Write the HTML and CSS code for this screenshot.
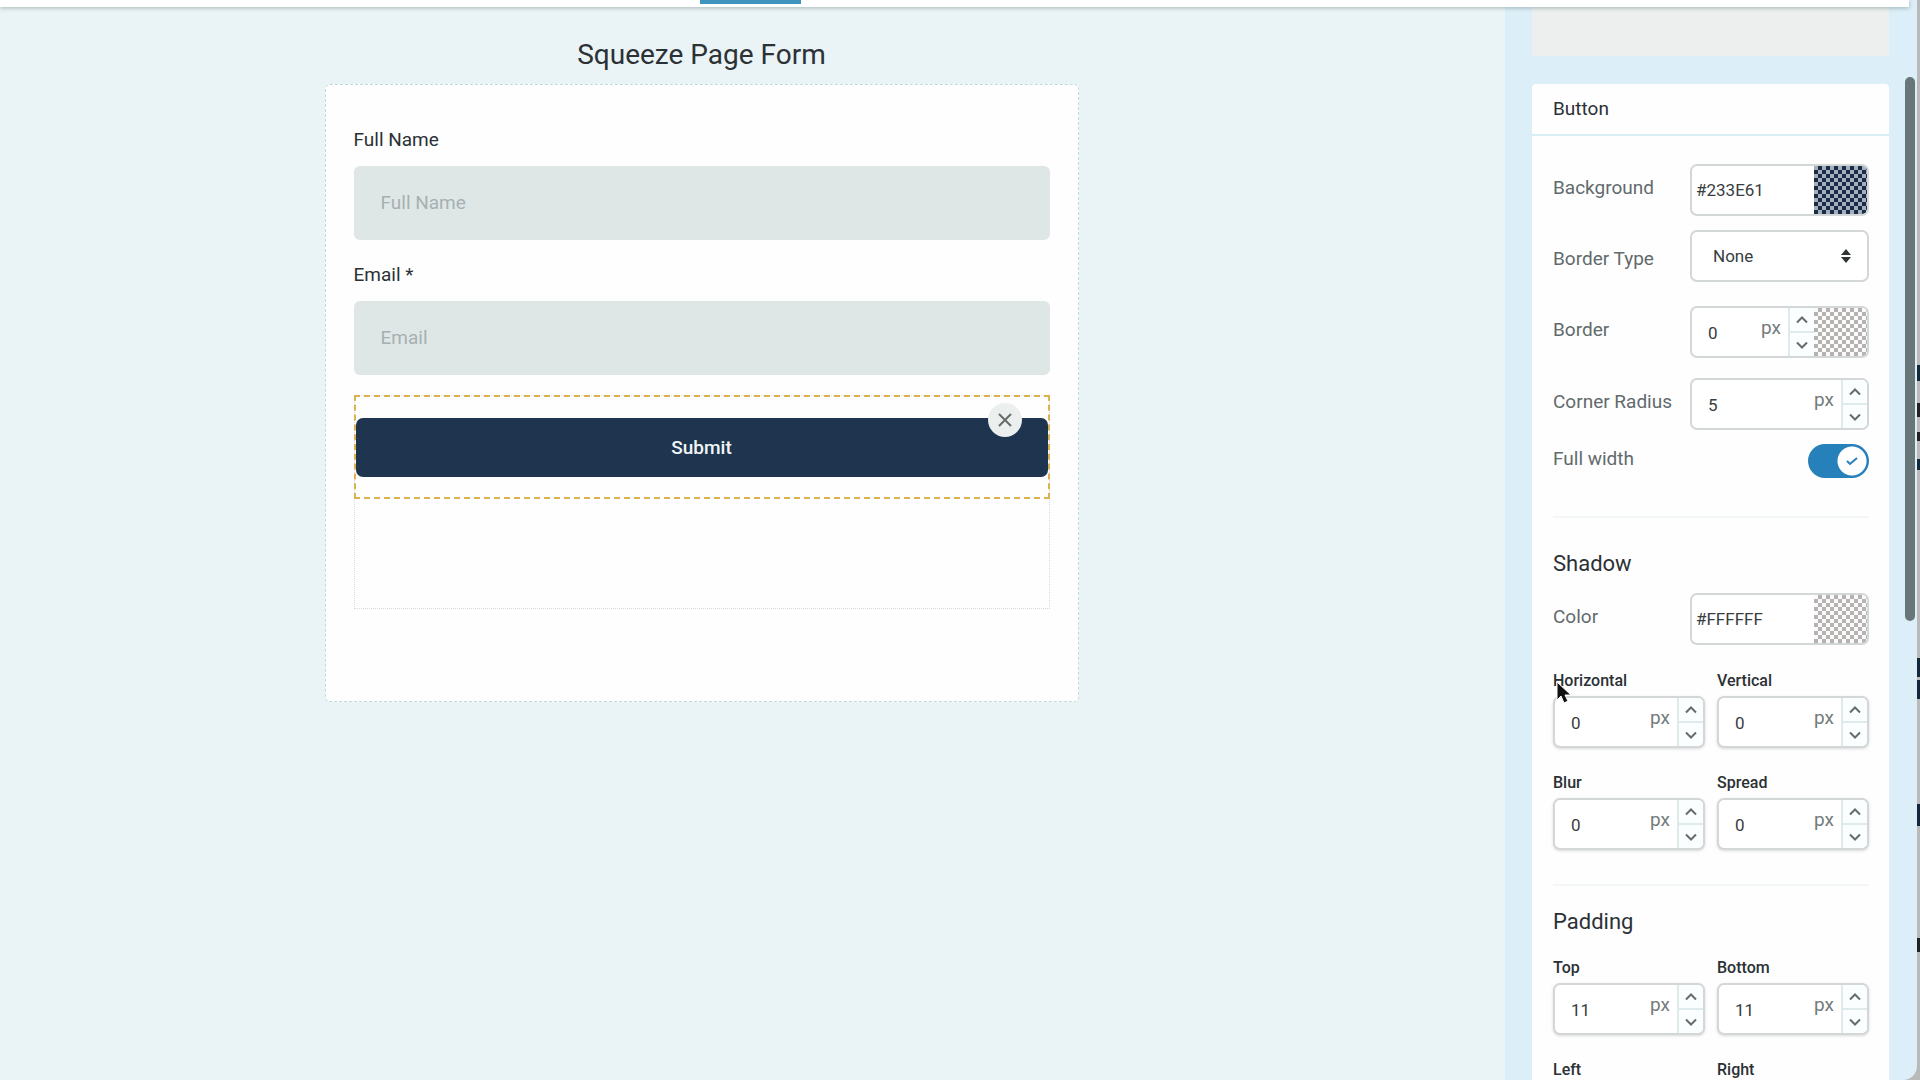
FILE: index.html
```
<!DOCTYPE html>
<html lang="en">
<head>
    <meta charset="UTF-8">
    <meta name="viewport" content="width=device-width, initial-scale=1.0">
    <title>Squeeze Page Form</title>
    <link rel="stylesheet" href="styles.css">
</head>
<body>
    <svg width="0" height="0" class="sprite" aria-hidden="true">
        <symbol id="up" viewBox="0 0 12 8"><path d="M1 6.5 6 1.5l5 5"/></symbol>
        <symbol id="down" viewBox="0 0 12 8"><path d="M1 1.5l5 5 5-5"/></symbol>
    </svg>

    <div class="window">
        <header class="topbar">
            <div class="tab-space"><span class="active-tab"></span></div>
        </header>
        <div class="editor">
            <main class="canvas">
                <h1>Squeeze Page Form</h1>
                <form class="form-box">
                    <label for="full-name">Full Name</label>
                    <input type="text" id="full-name" placeholder="Full Name">
                    <label for="email">Email *</label>
                    <input type="email" id="email" placeholder="Email">
                    <div class="drop-area">
                        <div class="selected">
                            <button type="button" class="submit">Submit</button>
                            <button type="button" class="remove" aria-label="Remove">
                                <svg width="14" height="14" viewBox="0 0 14 14"><path d="M1 1l12 12M13 1 1 13"/></svg>
                            </button>
                        </div>
                    </div>
                </form>
            </main>

            <aside class="sidebar">
                <div class="preview"></div>
                <section class="panel">
                    <h2>Button</h2>
                    <div class="panel-body">
                        <div class="row">
                            <label for="bg">Background</label>
                            <div class="control">
                                <input type="text" class="hex" id="bg" value="#233E61">
                                <button type="button" class="swatch navy" aria-label="Pick background"></button>
                            </div>
                        </div>
                        <div class="row row-select">
                            <label for="border-type">Border Type</label>
                            <div class="control select">
                                <select id="border-type"><option>None</option><option>Solid</option><option>Dashed</option></select>
                                <svg width="12" height="14" viewBox="0 0 12 14"><path d="M1 6 6 0l5 6zM1 8h10l-5 6z"/></svg>
                            </div>
                        </div>
                        <div class="row row-number">
                            <label for="border">Border</label>
                            <div class="control">
                                <input type="text" id="border" value="0"><span class="unit">px</span>
                                <span class="stepper"><button type="button" aria-label="Increase"><svg><use href="#up"/></svg></button><button type="button" aria-label="Decrease"><svg><use href="#down"/></svg></button></span>
                                <button type="button" class="swatch" aria-label="Pick border color"></button>
                            </div>
                        </div>
                        <div class="row row-number">
                            <label for="radius">Corner Radius</label>
                            <div class="control">
                                <input type="text" id="radius" value="5"><span class="unit">px</span>
                                <span class="stepper"><button type="button" aria-label="Increase"><svg><use href="#up"/></svg></button><button type="button" aria-label="Decrease"><svg><use href="#down"/></svg></button></span>
                            </div>
                        </div>
                        <div class="row row-toggle">
                            <label for="full-width">Full width</label>
                            <span class="toggle">
                                <input type="checkbox" id="full-width" checked>
                                <svg width="12" height="10" viewBox="0 0 12 10"><path d="M1 5l3 3 7-6"/></svg>
                            </span>
                        </div>

                        <hr>
                        <h3>Shadow</h3>
                        <div class="row row-color">
                            <label for="shadow">Color</label>
                            <div class="control">
                                <input type="text" class="hex" id="shadow" value="#FFFFFF">
                                <button type="button" class="swatch" aria-label="Pick shadow color"></button>
                            </div>
                        </div>
                        <div class="grid">
                            <div class="field">
                                <label for="horizontal">Horizontal</label>
                                <div class="control">
                                    <input type="text" id="horizontal" value="0"><span class="unit">px</span>
                                    <span class="stepper"><button type="button" aria-label="Increase"><svg><use href="#up"/></svg></button><button type="button" aria-label="Decrease"><svg><use href="#down"/></svg></button></span>
                                </div>
                            </div>
                            <div class="field">
                                <label for="vertical">Vertical</label>
                                <div class="control">
                                    <input type="text" id="vertical" value="0"><span class="unit">px</span>
                                    <span class="stepper"><button type="button" aria-label="Increase"><svg><use href="#up"/></svg></button><button type="button" aria-label="Decrease"><svg><use href="#down"/></svg></button></span>
                                </div>
                            </div>
                            <div class="field">
                                <label for="blur">Blur</label>
                                <div class="control">
                                    <input type="text" id="blur" value="0"><span class="unit">px</span>
                                    <span class="stepper"><button type="button" aria-label="Increase"><svg><use href="#up"/></svg></button><button type="button" aria-label="Decrease"><svg><use href="#down"/></svg></button></span>
                                </div>
                            </div>
                            <div class="field">
                                <label for="spread">Spread</label>
                                <div class="control">
                                    <input type="text" id="spread" value="0"><span class="unit">px</span>
                                    <span class="stepper"><button type="button" aria-label="Increase"><svg><use href="#up"/></svg></button><button type="button" aria-label="Decrease"><svg><use href="#down"/></svg></button></span>
                                </div>
                            </div>
                        </div>

                        <hr class="tight">
                        <h3>Padding</h3>
                        <div class="grid grid-padding">
                            <div class="field">
                                <label for="top">Top</label>
                                <div class="control">
                                    <input type="text" id="top" value="11"><span class="unit">px</span>
                                    <span class="stepper"><button type="button" aria-label="Increase"><svg><use href="#up"/></svg></button><button type="button" aria-label="Decrease"><svg><use href="#down"/></svg></button></span>
                                </div>
                            </div>
                            <div class="field">
                                <label for="bottom">Bottom</label>
                                <div class="control">
                                    <input type="text" id="bottom" value="11"><span class="unit">px</span>
                                    <span class="stepper"><button type="button" aria-label="Increase"><svg><use href="#up"/></svg></button><button type="button" aria-label="Decrease"><svg><use href="#down"/></svg></button></span>
                                </div>
                            </div>
                            <div class="field">
                                <label for="left">Left</label>
                                <div class="control"><input type="text" id="left"></div>
                            </div>
                            <div class="field">
                                <label for="right">Right</label>
                                <div class="control"><input type="text" id="right"></div>
                            </div>
                        </div>
                    </div>
                </section>
                <div class="scroll-thumb"></div>
            </aside>
        </div>
    </div>

    <svg class="cursor" width="16" height="24" viewBox="0 0 16 24"><path d="M1 1v18l4-4 3 7 4-2-3-6h6z"/></svg>
</body>
</html>
```

FILE: styles.css
```
* {
    box-sizing: border-box;
}

/* the 3px strip on the right is whatever lies behind the window */
body {
    margin: 0;
    height: 100vh;
    overflow: hidden;
    background: linear-gradient(#b9b9b9 365px, #14283c 365px 381px, #b9b9b9 381px 403px, #222 403px 417px, #b9b9b9 417px 432px, #222 432px 441px, #b9b9b9 441px 459px, #14283c 459px 470px, #b9b9b9 470px 658px, #14283c 658px 677px, #b9b9b9 677px 680px, #14283c 680px 699px, #b9b9b9 699px 804px, #14283c 804px 826px, #b9b9b9 826px 938px, #222 938px 952px, #b9b9b9 952px);
    font-family: Roboto, "Liberation Sans", sans-serif;
    color: #2b3135;
}

input,
select,
button {
    font-family: inherit;
    color: inherit;
    margin: 0;
    padding: 0;
    border: 0;
    background: none;
}

svg {
    fill: none;
    stroke: #666c6c;
    stroke-width: 2px;
}

.sprite {
    position: absolute;
}

.window {
    display: flex;
    flex-direction: column;
    height: 100vh;
    margin-right: 3px;
    overflow: hidden;
    border-radius: 0 0 14px 0;
    background: #dceef7;
}

.topbar {
    flex: none;
    height: 7px;
    margin-right: 8px;
    background: #fff;
    box-shadow: 0 1px 4px rgba(60, 90, 90, 0.4);
    z-index: 1;
}

.tab-space {
    display: flex;
    justify-content: center;
    margin-right: 409px;
}

.active-tab {
    width: 101px;
    height: 4px;
    background: #3f93bf;
}

.editor {
    display: flex;
    flex: 1;
    min-height: 0;
}

/* Form canvas */
.canvas {
    flex: 1;
    display: flex;
    flex-direction: column;
    align-items: center;
    padding: 28px 102px 0 0;
    background: #eaf3f5;
}

h1 {
    margin: 0 0 9px;
    font-size: 28px;
    line-height: 40px;
    font-weight: 400;
}

.form-box {
    width: 100%;
    max-width: 754px;
    padding: 40px 28px 92px;
    border: 1px dashed #bfdcdc;
    border-radius: 5px;
    background: #fefefe;
}

.form-box > label {
    display: block;
    margin-bottom: 12px;
    font-size: 19px;
    line-height: 29px;
}

.form-box > input {
    display: block;
    width: 100%;
    height: 74px;
    margin-bottom: 20px;
    padding: 0 27px 2px;
    border-radius: 6px;
    background: #dfe7e6;
    font-size: 19px;
}

::placeholder {
    color: #a6b0b2;
    opacity: 1;
}

.drop-area {
    height: 214px;
    border: 1px dotted #d5d9d9;
}

.selected {
    position: relative;
    margin: -1px;
    padding: 21px 0 20px;
    border: 2px dashed #dcb250;
}

.submit {
    display: block;
    width: 100%;
    height: 59px;
    border-radius: 7px;
    background: #1f354f;
    color: #f2f5f7;
    font-size: 19px;
    font-weight: 500;
}

.remove {
    position: absolute;
    top: 6px;
    right: 26px;
    display: grid;
    place-items: center;
    width: 34px;
    height: 34px;
    border-radius: 50%;
    background: #ebefed;
}

/* Settings sidebar */
.sidebar {
    position: relative;
    flex: none;
    width: 412px;
    padding: 0 28px 0 27px;
}

.preview {
    height: 49px;
    margin-bottom: 28px;
    background: #ecefed;
}

.panel {
    border-radius: 4px 4px 0 0;
    background: #fefefe;
}

h2 {
    margin: 0;
    padding: 0 21px;
    border-bottom: 2px solid #d9edf4;
    font-size: 19px;
    line-height: 50px;
    font-weight: 400;
}

.panel-body {
    padding: 28px 20px 0 21px;
}

.row {
    display: flex;
    justify-content: space-between;
    align-items: center;
    font-size: 19px;
    color: #626a6c;
}

.row > label {
    line-height: 46px;
    margin-top: -4px;
}

.row .control {
    width: 179px;
}

.row-select {
    margin-top: 14px;
}

.row-select > label {
    margin-top: 6px;
}

.row-number {
    margin-top: 24px;
}

.row-number + .row-number {
    margin-top: 20px;
}

.row-toggle {
    margin-top: 10px;
}

.control {
    position: relative;
    display: flex;
    height: 52px;
    border: 2px solid #d3d7d8;
    border-radius: 7px;
    overflow: hidden;
    background: #fff;
    color: #383d40;
}

.control input {
    flex: 1;
    min-width: 0;
    padding: 2px 0 0 16px;
    font-size: 17px;
}

.control .hex {
    padding: 0 0 0 4px;
}

.unit {
    margin-right: 7px;
    font-size: 19px;
    line-height: 40px;
    color: #747b7c;
}

.stepper {
    display: flex;
    flex-direction: column;
    width: 26px;
    border-left: 2px solid #dfeaec;
    background: #fafefe;
}

.stepper button {
    flex: 1;
    display: grid;
    place-items: center;
}

.stepper button + button {
    border-top: 2px solid #dfeaec;
}

.stepper svg {
    width: 12px;
    height: 8px;
}

.swatch {
    width: 53px;
    background: repeating-conic-gradient(#b5b2b1 0 25%, #fafafa 0 50%) 0 0 / 8px 8px;
}

.navy {
    background: repeating-conic-gradient(#1b2b45 0 25%, #a4afbd 0 50%) 0 0 / 8px 8px;
}

.select select {
    width: 100%;
    padding-left: 21px;
    appearance: none;
    font-size: 17px;
}

.select svg {
    position: absolute;
    top: 17px;
    right: 15px;
    fill: #303436;
    stroke: none;
}

.toggle {
    position: relative;
    width: 61px;
    height: 34px;
}

.toggle input {
    display: block;
    width: 100%;
    height: 100%;
    appearance: none;
    border-radius: 17px;
    background: radial-gradient(circle at 44px 17px, #fff 14px, #2680b9 15px);
}

.toggle svg {
    position: absolute;
    top: 12px;
    right: 11px;
    stroke: #2680b9;
    pointer-events: none;
}

hr {
    height: 2px;
    margin: 34px 0 28px;
    border: 0;
    background: #f3f6f6;
}

hr.tight {
    margin-bottom: 18px;
}

h3 {
    margin: 0;
    font-size: 22px;
    line-height: 36px;
    font-weight: 400;
}

.row-color {
    margin-top: 11px;
}

.grid {
    display: grid;
    grid-template-columns: repeat(2, minmax(0, 1fr));
    gap: 23px 12px;
    margin-top: 24px;
}

.grid-padding {
    margin-top: 16px;
}

.field label {
    display: block;
    margin-bottom: 3px;
    font-size: 16px;
    line-height: 24px;
    font-weight: 500;
}

.field .control {
    box-shadow: 0 1px 3px rgba(0, 0, 0, 0.15);
}

.scroll-thumb {
    position: absolute;
    top: 70px;
    right: 2px;
    width: 10px;
    height: 544px;
    border-radius: 5px;
    background: #687679;
}

.cursor {
    position: absolute;
    left: 1556px;
    top: 681px;
    fill: #111;
    stroke: #fff;
    stroke-width: 1px;
}
```
